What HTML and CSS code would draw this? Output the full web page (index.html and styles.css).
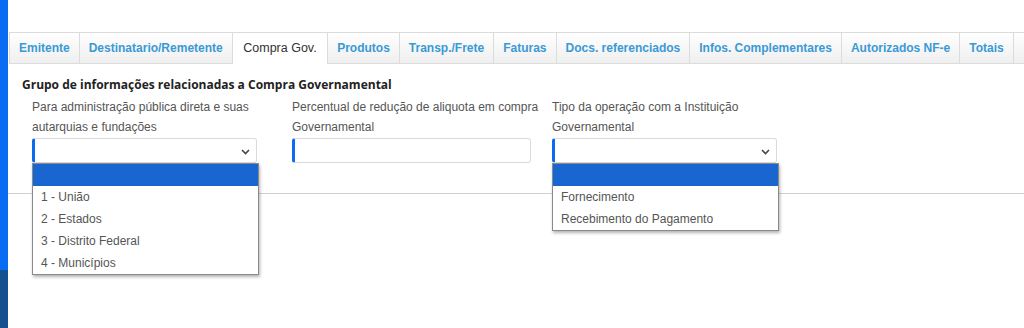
FILE: index.html
```html
<!DOCTYPE html>
<html lang="pt-BR">
<head>
<meta charset="utf-8">
<title>Compra Gov.</title>
<link rel="stylesheet" href="styles.css">
</head>
<body>
<div class="page">
  <div class="strip">
    <div class="strip-top"></div>
    <div class="strip-bottom"></div>
  </div>
  <div class="main">
    <ul class="tabs">
      <li class="tab">Emitente</li>
      <li class="tab">Destinatario/Remetente</li>
      <li class="tab active">Compra Gov.</li>
      <li class="tab">Produtos</li>
      <li class="tab">Transp./Frete</li>
      <li class="tab">Faturas</li>
      <li class="tab">Docs. referenciados</li>
      <li class="tab">Infos. Complementares</li>
      <li class="tab">Autorizados NF-e</li>
      <li class="tab">Totais</li>
      <li class="tab tab-more"></li>
    </ul>
    <div class="content">
      <h3 class="group-title">Grupo de informações relacionadas a Compra Governamental</h3>
      <div class="form-row">
        <div class="field">
          <label class="label">Para administração pública direta e suas autarquias e fundações</label>
          <div class="control select">
            <svg class="chevron" width="9" height="6" viewBox="0 0 9 6"><path d="M1 1 L4.5 4.5 L8 1" fill="none" stroke="#444" stroke-width="1.6"/></svg>
            <ul class="dropdown">
              <li class="opt selected">&nbsp;</li>
              <li class="opt">1 - União</li>
              <li class="opt">2 - Estados</li>
              <li class="opt">3 - Distrito Federal</li>
              <li class="opt">4 - Municípios</li>
            </ul>
          </div>
        </div>
        <div class="field">
          <label class="label">Percentual de redução de aliquota em compra Governamental</label>
          <div class="control input"></div>
        </div>
        <div class="field">
          <label class="label">Tipo da operação com a Instituição Governamental</label>
          <div class="control select">
            <svg class="chevron" width="9" height="6" viewBox="0 0 9 6"><path d="M1 1 L4.5 4.5 L8 1" fill="none" stroke="#444" stroke-width="1.6"/></svg>
            <ul class="dropdown">
              <li class="opt selected">&nbsp;</li>
              <li class="opt">Fornecimento</li>
              <li class="opt">Recebimento do Pagamento</li>
            </ul>
          </div>
        </div>
      </div>
      <div class="divider"></div>
    </div>
  </div>
</div>
</body>
</html>
```
FILE: styles.css
```css
* { box-sizing: border-box; }
html, body { margin: 0; padding: 0; background: #fff; }
body { font-family: "Liberation Sans", Arial, sans-serif; width: 1024px; height: 328px; overflow: hidden; }

.page { display: flex; height: 328px; }

.strip { width: 8px; display: flex; flex-direction: column; flex-shrink: 0; }
.strip-top { height: 270px; background: #0a6cf2; }
.strip-bottom { flex: 1; background: #16518f; }

.main { flex: 1; padding-top: 32px; overflow: hidden; }

.tabs {
  list-style: none; margin: 0 0 0 1px; padding: 0;
  display: flex; white-space: nowrap;
  border-bottom: 1px solid #dcdcdc;
  height: 32px;
}
.tab {
  flex-shrink: 0;
  height: 31px; line-height: 30px;
  padding: 0 9px 0 9px;
  font-size: 12px; font-weight: bold; color: #3a9ad6;
  background: linear-gradient(#ffffff, #efefef);
  border-top: 1px solid #dcdcdc;
  border-left: 1px solid #dcdcdc;
}
.tab.active {
  background: #fff; color: #333; font-weight: normal;
  height: 32px; font-size: 12.5px; padding: 0 10.5px;
}
.tab-more { width: 40px; }

.content { padding-top: 13px; }
.group-title {
  margin: 0 0 4px 14px;
  font-family: "Open Sans", "Noto Sans", sans-serif;
  font-size: 12px; font-weight: 700; color: #222; line-height: 16px;
}

.form-row {
  display: grid;
  grid-template-columns: 260px 260px 260px;
  padding-left: 24px;
}
.label {
  display: block; width: 250px; height: 40px; margin-bottom: 1px;
  font-size: 12px; line-height: 19.5px; color: #555;
  padding-top: 1px;
}

.control {
  position: relative; width: 225px; height: 25px;
  border: 1px solid #dadada; border-left: 3px solid #0a6cf2; border-radius: 3px;
  background: #fff;
}
.control.input { width: 239px; }
.chevron { position: absolute; right: 6px; top: 10px; }

.dropdown {
  position: absolute; left: -3px; top: 24px; width: 227px;
  list-style: none; margin: 0; padding: 0;
  background: #fff; border: 1px solid #8a8a8a;
  box-shadow: 1px 2px 3px rgba(0,0,0,0.3);
  z-index: 5;
}
.opt { height: 22px; line-height: 22px; padding-left: 8px; font-size: 12px; color: #555; }
.opt.selected { background: #1a66d0; }

.divider { margin-top: 30px; border-top: 1px solid #d0d0d0; }
```
